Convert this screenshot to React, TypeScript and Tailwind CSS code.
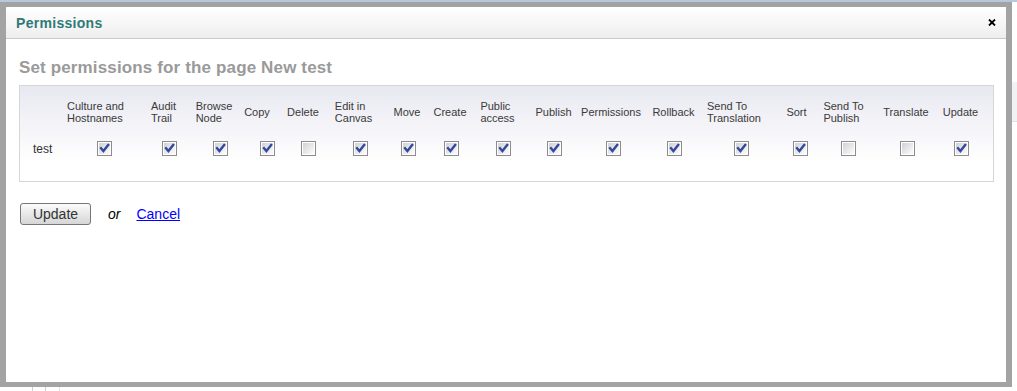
import React from 'react';

type Col = { label: string[]; pr: string; checked: boolean };

const cols: Col[] = [
  { label: ['Culture and', 'Hostnames'], pr: 'pr-[17px]', checked: true },
  { label: ['Audit', 'Trail'], pr: 'pr-[11px]', checked: true },
  { label: ['Browse', 'Node'], pr: 'pr-[12px]', checked: true },
  { label: ['Copy'], pr: 'pr-[20px]', checked: true },
  { label: ['Delete'], pr: 'pr-[10px]', checked: false },
  { label: ['Edit in', 'Canvas'], pr: 'pr-[13px]', checked: true },
  { label: ['Move'], pr: 'pr-[2px]', checked: true },
  { label: ['Create'], pr: 'pr-[2px]', checked: true },
  { label: ['Public', 'access'], pr: 'pr-[11px]', checked: true },
  { label: ['Publish'], pr: 'pr-[1px]', checked: true },
  { label: ['Permissions'], pr: 'pr-[4px]', checked: true },
  { label: ['Rollback'], pr: 'pr-[1px]', checked: true },
  { label: ['Send To', 'Translation'], pr: 'pr-[14px]', checked: true },
  { label: ['Sort'], pr: 'pr-[7px]', checked: true },
  { label: ['Send To', 'Publish'], pr: 'pr-[9px]', checked: false },
  { label: ['Translate'], pr: 'pr-[2px]', checked: false },
  { label: ['Update'], pr: 'pr-[1px]', checked: true },
];

function Checkbox({ checked }: { checked: boolean }) {
  return (
    <div className="w-[15px] h-[15px] border border-[#8c8c8c] bg-white p-[1px]">
      <div className="w-full h-full bg-linear-to-br from-[#d2d2d6] to-[#fcfcfc] flex items-center justify-center">
        {checked && (
          <svg width="11" height="11" viewBox="0 0 11 11">
            <path d="M2 5.2 L4.4 8 L9.2 2" fill="none" stroke="#33489f" strokeWidth="2.4" strokeLinecap="square" />
          </svg>
        )}
      </div>
    </div>
  );
}

export default function App() {
  return (
    <div className="w-[1017px] h-[391px] bg-white flex flex-col overflow-hidden font-['Liberation_Sans',Arial,sans-serif]">
      <div className="h-[2px] bg-[#b7c7dc] shrink-0" />
      <div className="flex h-[385px] shrink-0">
        <div className="w-[1012px] bg-[#a3a3a3] px-[6px] py-[5px]">
          <div className="w-[1000px] h-[375px] bg-white flex flex-col">
            <div className="h-[32px] shrink-0 border-b border-[#c8c8c8] bg-linear-to-b from-white to-[#eeeeee] flex items-center justify-between pl-[10px] pr-[10px]">
              <span className="text-[14px] font-bold tracking-[0.3px] text-[#2f7a77] leading-none">Permissions</span>
              <svg width="8" height="7" viewBox="0 0 8 7">
                <path d="M1 0.5 L7 6.5 M7 0.5 L1 6.5" stroke="#000" strokeWidth="1.8" />
              </svg>
            </div>
            <div className="pl-[13px] pr-[12px] pt-[19px] flex flex-col">
              <h2 className="text-[17px] leading-[20px] font-bold tracking-[0.14px] text-[#9a9a9a]">Set permissions for the page New test</h2>
              <div className="mt-[7px] h-[97px] border border-[#d6d6d6] bg-linear-to-b from-[#e8e8f1] to-white to-80%">
                <div className="grid grid-cols-[42px_84px_46px_56px_38px_44px_60px_36px_50px_54px_48px_70px_52px_82px_36px_60px_58px_50px] grid-rows-[52px_21px]">
                  <div />
                  {cols.map((c, i) => (
                    <div key={'h' + i} className="flex items-center justify-center">
                      <div className={`${c.pr} text-left text-[11px] leading-[12px] text-[#3a3a3a] whitespace-nowrap`}>
                        {c.label.map((l, j) => (
                          <div key={j}>{l}</div>
                        ))}
                      </div>
                    </div>
                  ))}
                  <div className="flex items-center pl-[13px] text-[12px] text-[#333]">test</div>
                  {cols.map((c, i) => (
                    <div key={'c' + i} className="flex items-center justify-center">
                      <Checkbox checked={c.checked} />
                    </div>
                  ))}
                </div>
              </div>
              <div className="mt-[21px] flex items-center">
                <button className="ml-[1px] w-[71px] h-[22px] rounded-[3px] border border-[#777] bg-linear-to-b from-[#fbfbfb] to-[#d6d6d6] text-[14px] text-[#333] leading-none flex items-center justify-center">
                  Update
                </button>
                <span className="ml-[17px] text-[14px] italic text-black">or</span>
                <a href="#" className="ml-[16px] text-[14px] text-[#0000ff] underline">Cancel</a>
              </div>
            </div>
          </div>
        </div>
        <div className="flex-1 flex flex-col">
          <div className="h-[80px] bg-white" />
          <div className="h-[40px] bg-[#f2f2f4] border-b border-[#e2e2e2]" />
          <div className="flex-1 bg-white" />
        </div>
      </div>
      <div className="flex-1 flex bg-white">
        <div className="w-[32px]" />
        <div className="w-[13px] border-l border-[#cfcfcf]" />
        <div className="w-[14px] border-l border-[#cfcfcf]" />
        <div className="flex-1 border-l border-[#e0e0e0]" />
      </div>
    </div>
  );
}
